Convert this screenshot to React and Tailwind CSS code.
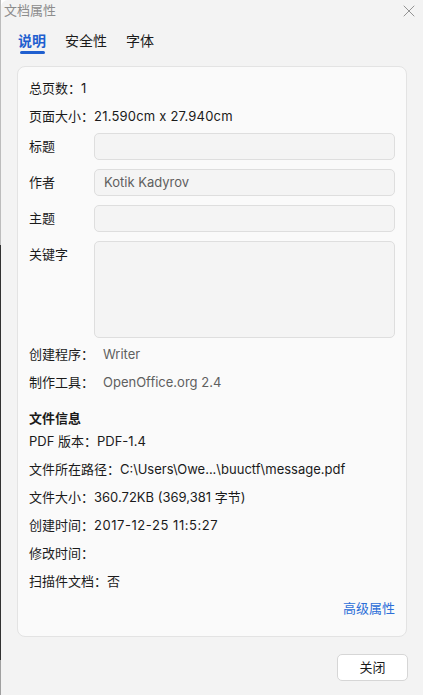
import { X } from "lucide-react";

const font = { fontFamily: "Inter, 'Noto Sans CJK SC', sans-serif" };

function InfoRow({ label, value, wide }) {
  return (
    <div className="h-[28px] flex items-center text-[13px] text-[#1b1b1b]">
      <span>{label}</span>
      {value && <span className={wide ? "tracking-[0.55px]" : ""}>{value}</span>}
    </div>
  );
}

function FieldRow({ label, value, tall }) {
  return (
    <div className="flex">
      <div className={`w-[65px] shrink-0 text-[13px] text-[#1b1b1b] ${tall ? "pt-[4px]" : "h-[27px] flex items-center"}`}>
        {label}
      </div>
      <div
        className={`flex-1 rounded-[5px] border border-[#dedede] bg-[#f4f4f4] pl-[9px] text-[13px] text-[#5f5f5f] ${
          tall ? "h-[97px]" : "h-[27px] flex items-center"
        }`}
      >
        {value}
      </div>
    </div>
  );
}

export default function App() {
  return (
    <div className="w-[423px] h-[695px] flex bg-white overflow-hidden" style={font}>
      {/* sliver of whatever is behind the dialog */}
      <div className="w-px shrink-0 flex flex-col">
        <div className="h-[245px] bg-[#bcbcbc]" />
        <div className="h-[415px] bg-[#313131]" />
        <div className="flex-1 bg-[#a0a0a0]" />
      </div>

      <div className="flex-1 flex flex-col bg-[#f3f3f3] rounded-tl-[7px]">
        {/* title bar */}
        <div className="h-[22px] flex items-center justify-between pl-[3px] pr-[4px]">
          <span className="text-[13px] text-[#8c8c8c]">文档属性</span>
          <X size={20} strokeWidth={1.1} className="text-[#8a8a8a]" />
        </div>

        {/* tabs */}
        <div className="flex gap-[19px] pl-[17px] h-[40px] items-start pt-[9px]">
          <div className="flex flex-col items-center">
            <span className="text-[14px] leading-[20px] font-bold text-[#1f5fcf]">说明</span>
            <div className="h-[3px] w-[25px] rounded-full bg-[#1f5fcf]" />
          </div>
          <span className="text-[14px] leading-[20px] text-[#1b1b1b]">安全性</span>
          <span className="text-[14px] leading-[20px] text-[#1b1b1b]">字体</span>
        </div>

        {/* card */}
        <div className="mx-[16px] mt-[4px] h-[571px] rounded-[8px] border border-[#e3e3e3] bg-[#fafafa] px-[11px] pt-[8px] flex flex-col">
          <InfoRow label="总页数：" value="1" />
          <div className="h-[28px] flex items-center text-[13px] text-[#1b1b1b]">
            <span>页面大小：</span>
            <span className="tracking-[0.2px]">21.590cm x 27.940cm</span>
          </div>

          <div className="mt-[2px] flex flex-col gap-[9px]">
            <FieldRow label="标题" />
            <FieldRow label="作者" value="Kotik Kadyrov" />
            <FieldRow label="主题" />
            <FieldRow label="关键字" tall />
          </div>

          <div className="mt-[3px]">
            <div className="h-[28px] flex items-center text-[13px]">
              <span className="w-[74px] text-[#1b1b1b]">创建程序：</span>
              <span className="text-[#5f5f5f]">Writer</span>
            </div>
            <div className="h-[28px] flex items-center text-[13px]">
              <span className="w-[74px] text-[#1b1b1b]">制作工具：</span>
              <span className="text-[#5f5f5f]">OpenOffice.org 2.4</span>
            </div>
          </div>

          <div className="mt-[13px] h-[18px] flex items-center text-[13px] font-bold text-[#1b1b1b]">文件信息</div>
          <InfoRow label="PDF 版本：" value="PDF-1.4" />
          <InfoRow label="文件所在路径：" value="C:\Users\Owe...\buuctf\message.pdf" />
          <InfoRow label="文件大小：" value="360.72KB (369,381 字节)" />
          <InfoRow label="创建时间：" value="2017-12-25 11:5:27" wide />
          <InfoRow label="修改时间：" />
          <InfoRow label="扫描件文档：" value="否" />

          <div className="h-[26px] flex items-center justify-end text-[13px] text-[#2c6fd8]">高级属性</div>
        </div>

        {/* footer */}
        <div className="flex justify-end pr-[15px] pt-[17px]">
          <button className="w-[71px] h-[27px] rounded-[5px] border border-[#d6d6d6] bg-white text-[13px] text-[#1b1b1b]">
            关闭
          </button>
        </div>
      </div>
    </div>
  );
}
